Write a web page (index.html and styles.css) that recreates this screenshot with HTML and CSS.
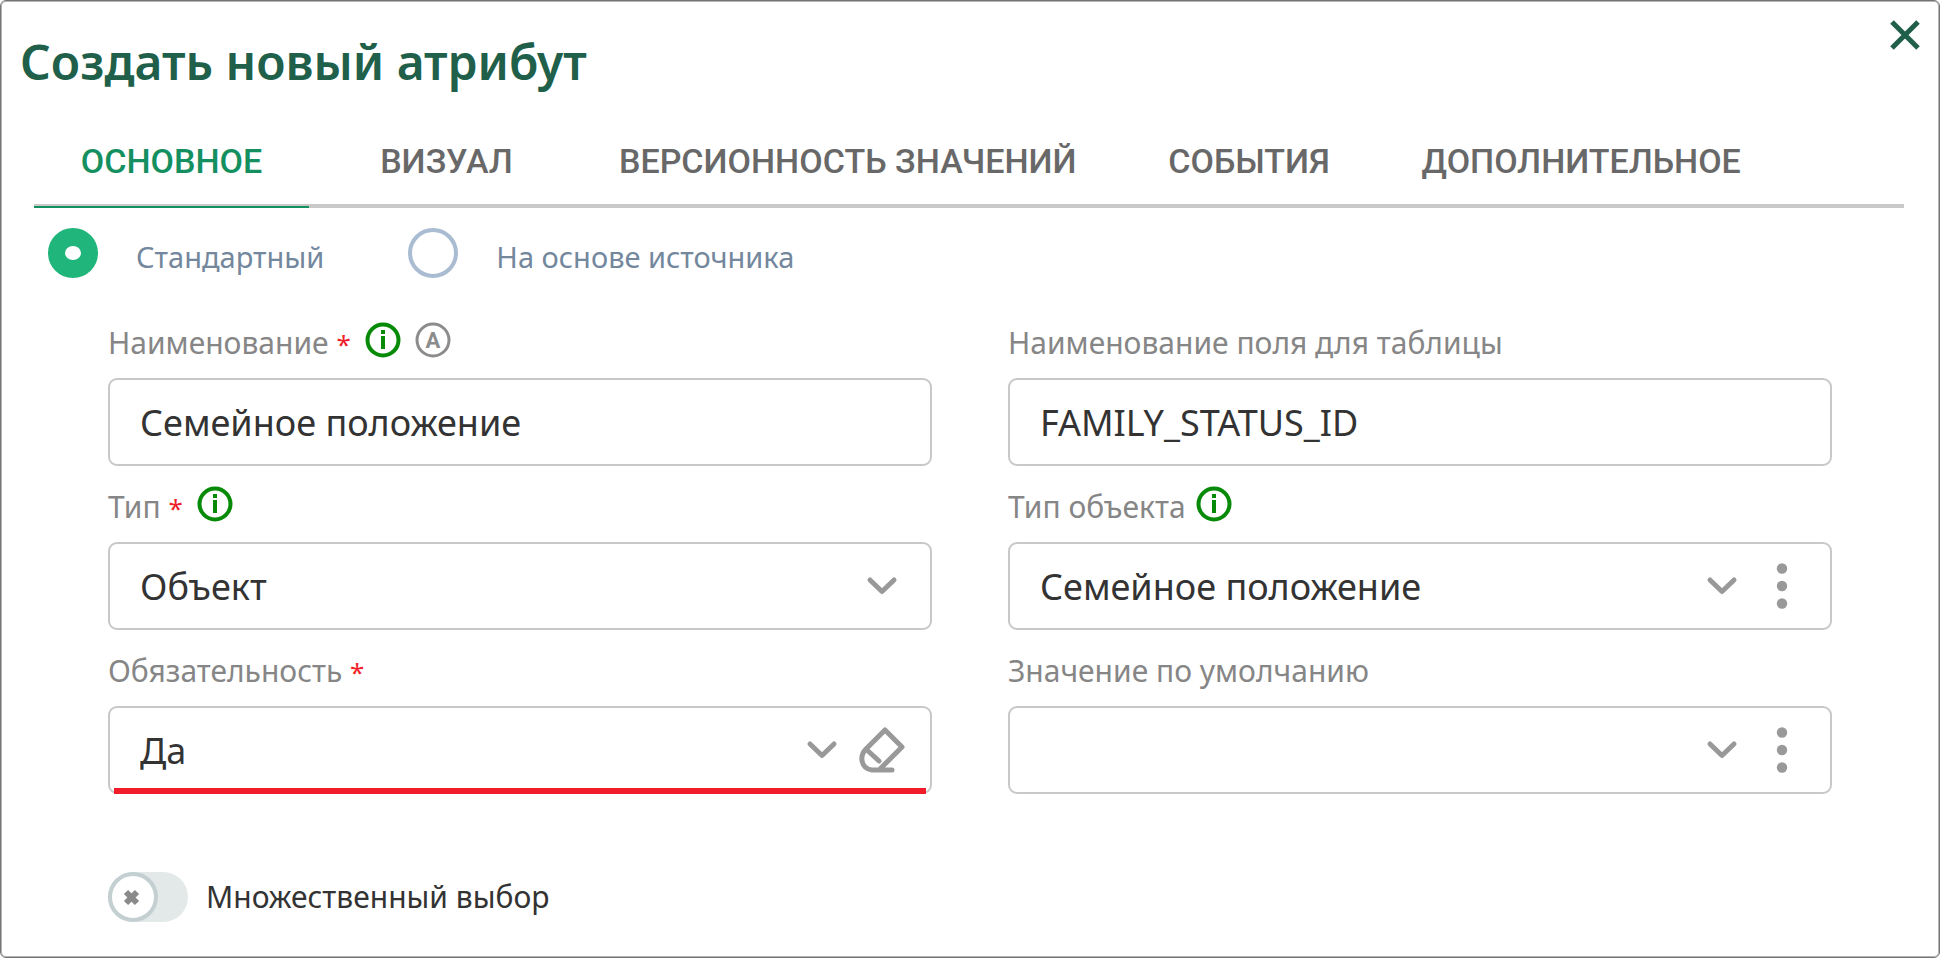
FILE: index.html
```html
<!DOCTYPE html>
<html lang="ru">
<head>
    <meta charset="UTF-8">
    <meta name="viewport" content="width=device-width, initial-scale=1.0">
    <title>Создать новый атрибут</title>
    <link rel="stylesheet" href="styles.css">
</head>
<body>
    <!-- shared icons -->
    <svg class="sprite" aria-hidden="true">
        <symbol id="icon-info" viewBox="0 0 36 36">
            <circle cx="18" cy="18" r="15.5" fill="none" stroke="currentColor" stroke-width="4"/>
            <rect x="16" y="8" width="4" height="4" fill="currentColor"/>
            <rect x="16" y="14" width="4" height="13" fill="currentColor"/>
        </symbol>
        <symbol id="icon-chevron" viewBox="0 0 60 60">
            <path d="M18 24 30 35.5 42 24" fill="none" stroke="currentColor" stroke-width="5" stroke-linecap="round" stroke-linejoin="round"/>
        </symbol>
        <symbol id="icon-dots" viewBox="0 0 60 60">
            <circle cx="30" cy="12.5" r="5.2" fill="currentColor"/>
            <circle cx="30" cy="30" r="5.2" fill="currentColor"/>
            <circle cx="30" cy="47.5" r="5.2" fill="currentColor"/>
        </symbol>
        <symbol id="icon-eraser" viewBox="0 0 60 60">
            <g fill="none" stroke="currentColor" stroke-width="5" stroke-linecap="round" stroke-linejoin="round">
                <path d="M40 50H20C9 49 7 36 14 29L33 10 50 27 28 49"/>
                <path d="M15 30 27 41"/>
            </g>
        </symbol>
    </svg>

    <div class="modal" role="dialog" aria-labelledby="modal-title">
        <header class="modal-header">
            <h1 id="modal-title">Создать новый атрибут</h1>
            <button type="button" class="close" aria-label="Закрыть">
                <svg viewBox="0 0 30 30"><path d="M2 2 28 28M28 2 2 28" fill="none" stroke="currentColor" stroke-width="5"/></svg>
            </button>
        </header>

        <div class="tabs" role="tablist">
            <button type="button" class="tab active" role="tab" aria-selected="true">ОСНОВНОЕ</button>
            <button type="button" class="tab" role="tab" aria-selected="false">ВИЗУАЛ</button>
            <button type="button" class="tab" role="tab" aria-selected="false">ВЕРСИОННОСТЬ ЗНАЧЕНИЙ</button>
            <button type="button" class="tab" role="tab" aria-selected="false">СОБЫТИЯ</button>
            <button type="button" class="tab" role="tab" aria-selected="false">ДОПОЛНИТЕЛЬНОЕ</button>
        </div>

        <form>
            <div class="radios">
                <label class="radio">
                    <input type="radio" name="kind" checked>
                    <span>Стандартный</span>
                </label>
                <label class="radio">
                    <input type="radio" name="kind">
                    <span>На основе источника</span>
                </label>
            </div>

            <div class="fields">
                <div class="field">
                    <div class="field-label">
                        <label for="name">Наименование <span class="required">*</span></label>
                        <svg class="hint info"><use href="#icon-info"/></svg>
                        <svg class="hint auto" viewBox="0 0 36 36">
                            <circle cx="18" cy="18" r="16" fill="none" stroke="currentColor" stroke-width="3"/>
                            <text x="18" y="26" text-anchor="middle">A</text>
                        </svg>
                    </div>
                    <div class="control">
                        <input type="text" id="name" value="Семейное положение">
                    </div>
                </div>

                <div class="field">
                    <div class="field-label">
                        <label for="column">Наименование поля для таблицы</label>
                    </div>
                    <div class="control">
                        <input type="text" id="column" value="FAMILY_STATUS_ID">
                    </div>
                </div>

                <div class="field">
                    <div class="field-label">
                        <label for="type">Тип <span class="required">*</span></label>
                        <svg class="hint info"><use href="#icon-info"/></svg>
                    </div>
                    <div class="control">
                        <select id="type"><option>Объект</option></select>
                        <svg class="icon"><use href="#icon-chevron"/></svg>
                    </div>
                </div>

                <div class="field">
                    <div class="field-label">
                        <label for="object-type">Тип объекта</label>
                        <svg class="hint info"><use href="#icon-info"/></svg>
                    </div>
                    <div class="control">
                        <select id="object-type"><option>Семейное положение</option></select>
                        <svg class="icon"><use href="#icon-chevron"/></svg>
                        <button type="button" class="icon" aria-label="Ещё"><svg class="icon"><use href="#icon-dots"/></svg></button>
                    </div>
                </div>

                <div class="field">
                    <div class="field-label">
                        <label for="mandatory">Обязательность <span class="required">*</span></label>
                    </div>
                    <div class="control marked">
                        <select id="mandatory"><option>Да</option></select>
                        <svg class="icon"><use href="#icon-chevron"/></svg>
                        <button type="button" class="icon" aria-label="Очистить"><svg class="icon"><use href="#icon-eraser"/></svg></button>
                    </div>
                </div>

                <div class="field">
                    <div class="field-label">
                        <label for="default">Значение по умолчанию</label>
                    </div>
                    <div class="control">
                        <select id="default"><option></option></select>
                        <svg class="icon"><use href="#icon-chevron"/></svg>
                        <button type="button" class="icon" aria-label="Ещё"><svg class="icon"><use href="#icon-dots"/></svg></button>
                    </div>
                </div>
            </div>

            <label class="switch">
                <span class="switch-box">
                    <input type="checkbox">
                    <svg viewBox="0 0 50 50"><path d="M18 20 29 31M29 20 18 31" fill="none" stroke="currentColor" stroke-width="6"/></svg>
                </span>
                Множественный выбор
            </label>
        </form>
    </div>
</body>
</html>
```
FILE: styles.css
```css
*,
*::before,
*::after {
    box-sizing: border-box;
}

body {
    margin: 0;
    font-family: "Noto Sans", sans-serif;
    color: #333;
    background-color: #fff;
}

button {
    border: 0;
    padding: 0;
    background: none;
    cursor: pointer;
}

.sprite {
    display: none;
}

.modal {
    min-height: 100vh;
    border: 1px solid #747474;
    border-radius: 6px;
    box-shadow: inset 0 0 0 1px #b4b4b4;
    background-color: #fff;
}

.modal-header {
    display: flex;
    justify-content: space-between;
    align-items: flex-start;
    padding: 19px 19px 0;
}

.modal-header h1 {
    margin: 12px 0 0;
    font-size: 48px;
    line-height: 60px;
    font-weight: 600;
    color: #205f4a;
}

.close {
    color: #205f4a;
}

.close svg {
    display: block;
    width: 30px;
    height: 30px;
}

/* Tabs */
.tabs {
    display: flex;
    margin: 24px 35px 0 33px;
    box-shadow: inset 0 -4px #c9c9c9;
}

.tab {
    min-width: 275px;
    height: 92px;
    padding: 0 35px 2px;
    font: 500 34px "Roboto", sans-serif;
    color: #686868;
}

.tab.active {
    color: #149060;
    box-shadow: inset 0 -2px #149060;
}

/* Attribute kind */
.radios {
    display: flex;
    gap: 84px;
    margin: 20px 47px 0;
}

.radio {
    display: flex;
    gap: 38px;
    font-size: 29px;
    line-height: 58px;
    color: #73879d;
}

.radio input {
    appearance: none;
    display: grid;
    place-items: center;
    width: 50px;
    height: 50px;
    margin: 0;
    border: 4px solid #a9bcd2;
    border-radius: 50%;
}

.radio input:checked {
    border-color: #20b57a;
    background-color: #20b57a;
}

.radio input:checked::before {
    content: "";
    width: 16px;
    height: 14px;
    border-radius: 50%;
    background-color: #fff;
}

/* Fields */
.fields {
    display: grid;
    grid-template-columns: 1fr 1fr;
    gap: 18px 76px;
    margin: 34px 107px 0;
}

.field-label {
    display: flex;
    align-items: center;
    height: 46px;
    margin-bottom: 12px;
    font-size: 30px;
    line-height: 46px;
    color: #868686;
}

.required {
    margin-right: 4px;
    font-size: 26px;
    line-height: 1;
    color: #f11d2a;
}

.hint {
    width: 36px;
    height: 36px;
    margin: 0 4px 6px 10px;
}

.hint.info {
    color: #078a07;
}

.hint.auto {
    color: #8c8c8c;
}

.hint text {
    font: 700 22px "Roboto", sans-serif;
    fill: currentColor;
}

.control {
    position: relative;
    display: flex;
    align-items: center;
    height: 88px;
    padding-right: 18px;
    border: 2px solid #c8c8c8;
    border-radius: 9px;
}

.control input,
.control select {
    appearance: none;
    flex: 1;
    min-width: 0;
    height: 100%;
    padding: 0 0 0 30px;
    border: 0;
    outline: 0;
    background: none;
    font: 36px "Noto Sans", sans-serif;
    color: #333;
}

.icon {
    display: block;
    width: 60px;
    height: 60px;
    color: #999;
}

.control.marked::after {
    content: "";
    position: absolute;
    left: 4px;
    right: 4px;
    bottom: -2px;
    height: 6px;
    background-color: #f11d2a;
}

/* Switch */
.switch {
    display: inline-flex;
    align-items: center;
    gap: 18px;
    margin: 78px 107px 0;
    font-size: 30px;
    line-height: 50px;
}

.switch-box {
    display: grid;
    width: 80px;
    height: 50px;
}

.switch-box input {
    appearance: none;
    grid-area: 1 / 1;
    margin: 0;
    border-radius: 25px;
    background-color: #e3e8e9;
}

.switch-box input::before {
    content: "";
    display: block;
    width: 50px;
    height: 50px;
    border: 4px solid #c4cfd1;
    border-radius: 50%;
    background-color: #fff;
}

.switch-box svg {
    grid-area: 1 / 1;
    width: 50px;
    height: 50px;
    color: #8a8a8a;
    z-index: 1;
    pointer-events: none;
}
```
